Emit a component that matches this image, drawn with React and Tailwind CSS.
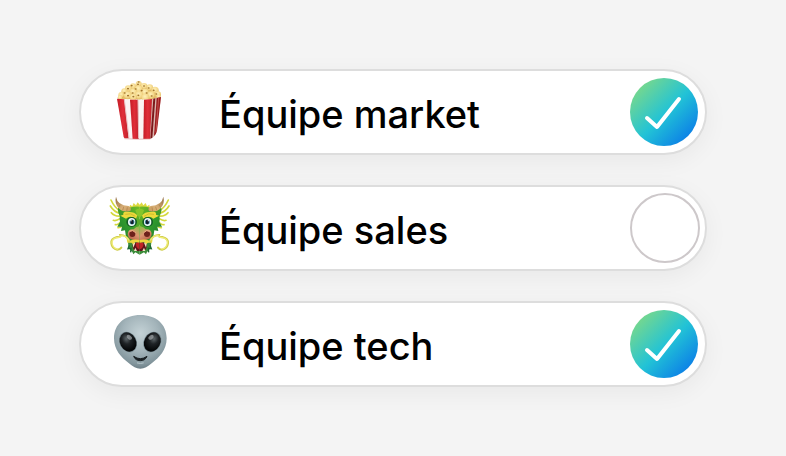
import React from "react";

const kernels = [
  [206, 72, 9], [189, 79, 9], [222, 79, 10], [175, 86, 10], [239, 83, 10], [206, 88, 12],
  [163, 94, 9], [255, 91, 11], [190, 97, 12], [225, 98, 12], [154, 105, 9], [264, 103, 9],
  [173, 106, 12], [207, 106, 13], [243, 106, 12], [150, 113, 7], [190, 112, 11], [226, 113, 12], [266, 111, 7],
];

const crumbs = [
  [206, 66], [204, 73], [185, 77], [222, 78], [174, 86], [197, 87], [236, 84], [251, 91], [215, 92],
  [164, 99], [188, 99], [230, 99], [259, 102], [174, 107], [205, 106], [245, 108], [190, 110],
];

function Popcorn() {
  return (
    <svg viewBox="117 60 192 192" className="size-16 shrink-0" aria-hidden="true">
      <defs>
        <linearGradient id="popcornRed" x1="0" x2="1" y1="0" y2="0">
          <stop offset="0" stopColor="#c41c26" />
          <stop offset="0.5" stopColor="#e02d38" />
          <stop offset="1" stopColor="#c2222c" />
        </linearGradient>
        <radialGradient id="popcornKernel" cx="0.45" cy="0.35" r="0.65">
          <stop offset="0" stopColor="#fff1b8" />
          <stop offset="0.65" stopColor="#f3d687" />
          <stop offset="1" stopColor="#dbb25a" />
        </radialGradient>
      </defs>
      <path d="M150 118 Q152 98 176 90 Q206 72 236 88 Q260 94 267 116 Z" fill="#e6c06a" />
      {kernels.map(([x, y, r]) => (
        <circle key={`${x}-${y}`} cx={x} cy={y} r={r} fill="url(#popcornKernel)" />
      ))}
      {crumbs.map(([x, y]) => (
        <ellipse key={`${x}-${y}`} cx={x} cy={y} rx="3.2" ry="2.4" fill="#a3752d" />
      ))}
      <path d="M141 116 Q190 121 243 118 L240 237 H168 Q162 237 161 231 Z" fill="#fbf3f3" />
      <path d="M243 118 L273 111 L259 217 Q256 231 240 237 Z" fill="#d9b5ad" />
      <path d="M141 116 L163 118 L176 235 H167 Q162 235 161 231 Z" fill="url(#popcornRed)" />
      <path d="M180 119 H204 L206 237 H188 Z" fill="url(#popcornRed)" />
      <path d="M222 119 L246 117 L240 237 H220 Z" fill="url(#popcornRed)" />
      <path d="M250 116 L256 115 L247 233 L241 236 Z" fill="#7c1719" />
      <path d="M260 114 L273 111 L261 212 Q258 224 252 228 Z" fill="#9c1c20" />
      <path d="M266 114 L258 217" stroke="#d66b62" strokeWidth="2" fill="none" />
      <path d="M163 119 L177 233 M204 120 L206 234" stroke="#e9c3c4" strokeWidth="3" fill="none" />
      <path d="M163 236 Q200 239 241 237" stroke="#d6a09f" strokeWidth="2" fill="none" />
    </svg>
  );
}

// One half of the face, drawn twice and mirrored
function DragonHalf() {
  return (
    <g>
      {/* Side frills */}
      <path
        d="M152 94 Q134 84 123 60 M150 100 Q132 96 121 78 M152 108 Q134 110 124 98 M150 116 Q138 124 130 121 M152 126 Q144 136 136 134 M156 138 Q150 144 144 143"
        fill="none"
        stroke="#d3d83c"
        strokeWidth="5"
        strokeLinecap="round"
      />
      {/* Head */}
      <path
        d="M209 80 Q178 78 158 94 Q146 104 150 126 L142 140 L156 140 L153 153 L165 151 L168 170 L180 190 L209 196 Z"
        fill="url(#dragonGreen)"
      />
      <path d="M144 84 Q158 84 166 98 L151 110 Q142 98 144 84 Z" fill="#3f9a2a" />
      {/* Horn */}
      <path d="M138 50 Q142 76 176 78 Q186 84 181 93 Q160 98 148 87 Q132 71 138 50 Z" fill="url(#dragonHorn)" />
      <path d="M150 74 L146 83 M161 80 L158 91 M172 82 L170 94" stroke="#a97b45" strokeWidth="2" />
      {/* Brow */}
      <path d="M160 104 Q158 92 174 96 Q192 94 202 106 L198 116 Q180 104 168 116 L151 107 Z" fill="#ecd93a" />
      <path d="M166 103 Q182 97 196 109" stroke="#bfae28" strokeWidth="2" fill="none" />
      {/* Eye */}
      <ellipse cx="185" cy="126" rx="16" ry="15" fill="#135d24" />
      <ellipse cx="185" cy="126" rx="11" ry="12" fill="#f6fbfb" />
      <circle cx="186" cy="126" r="7.5" fill="#4b9bbb" />
      <ellipse cx="186" cy="126" rx="5" ry="7" fill="#101e2a" />
      <circle cx="183" cy="122" r="2" fill="#ffffff" />
      {/* Jaw */}
      <path d="M174 186 Q174 207 187 216 L190 223 L196 217 L209 224 L209 184 Z" fill="#3b8c39" />
      <path d="M178 196 L174 206 L183 205 L182 217" stroke="#1c6630" strokeWidth="4" fill="none" />
      <path d="M188 190 Q186 208 196 213 L209 213 L209 186 Z" fill="#5e1519" />
      <path d="M198 188 Q196 204 209 208 V186 Z" fill="#c02427" />
      <path d="M187 186 L190 203 L196 188 Z M192 213 L196 203 L201 213 Z" fill="#f3e6c8" />
      {/* Snout */}
      <path d="M209 138 Q196 140 191 148 Q174 146 173 162 Q174 178 191 180 L209 182 Z" fill="url(#dragonSnout)" />
      <ellipse cx="187" cy="162" rx="9" ry="9" fill="#6d211b" />
      <path d="M179 154 Q188 148 197 158" stroke="#f4ae87" strokeWidth="3" fill="none" />
      <path d="M209 180 Q192 176 178 183 L170 177 L172 188 L184 188 L190 192 L196 186 L209 188 Z" fill="#ecd83e" />
      {/* Whisker */}
      <path
        d="M178 183 Q169 165 151 165 Q154 172 141 171 Q122 176 124 190 Q126 206 142 209 Q150 209 154 203"
        fill="none"
        stroke="#cfcd4b"
        strokeWidth="6"
        strokeLinecap="round"
      />
      <path
        d="M176 180 Q168 166 154 167 Q150 174 140 173 Q124 178 126 190 Q129 204 142 207"
        fill="none"
        stroke="#f0ed78"
        strokeWidth="4"
        strokeLinecap="round"
      />
    </g>
  );
}

function Dragon() {
  return (
    <svg viewBox="117 48 192 192" className="size-16 shrink-0" aria-hidden="true">
      <defs>
        <linearGradient id="dragonGreen" x1="1" x2="0" y1="0" y2="1">
          <stop offset="0" stopColor="#74bb24" />
          <stop offset="0.5" stopColor="#309a2c" />
          <stop offset="1" stopColor="#1d7430" />
        </linearGradient>
        <linearGradient id="dragonHorn" x1="0" x2="1" y1="0" y2="1">
          <stop offset="0" stopColor="#8d6a40" />
          <stop offset="0.6" stopColor="#d9b078" />
          <stop offset="1" stopColor="#c79a5c" />
        </linearGradient>
        <linearGradient id="dragonSnout" x1="0.8" x2="0.3" y1="0" y2="1">
          <stop offset="0" stopColor="#8fbd49" />
          <stop offset="0.5" stopColor="#dc9671" />
          <stop offset="1" stopColor="#b65c45" />
        </linearGradient>
      </defs>
      <path
        d="M178 86 L180 74 L187 79 L191 69 L198 76 L203 67 L209 74 L215 67 L220 76 L227 69 L231 79 L238 74 L240 86 Z"
        fill="#dcd93f"
      />
      <DragonHalf />
      <g transform="translate(418 0) scale(-1 1)">
        <DragonHalf />
      </g>
      <path d="M196 90 Q209 82 222 90 L216 107 L209 112 L202 107 Z" fill="#86c52b" />
      <path d="M203 116 Q209 120 215 116 L214 134 H204 Z" fill="#56a72d" />
    </svg>
  );
}

function Alien() {
  return (
    <svg viewBox="117 48 192 192" className="size-16 shrink-0" aria-hidden="true">
      <defs>
        <radialGradient id="alienSkin" cx="0.5" cy="0.34" r="0.68">
          <stop offset="0" stopColor="#c4d2d6" />
          <stop offset="0.5" stopColor="#a3b4ba" />
          <stop offset="0.85" stopColor="#82959c" />
          <stop offset="1" stopColor="#687a82" />
        </radialGradient>
        <radialGradient id="alienEye" cx="0.5" cy="0.32" r="0.6">
          <stop offset="0" stopColor="#5d6568" />
          <stop offset="0.45" stopColor="#1f2326" />
          <stop offset="1" stopColor="#050708" />
        </radialGradient>
      </defs>
      <path
        d="M211 57 C258 57 290 84 290 127 C290 162 268 185 246 201 C232 212 224 218 211 218 C198 218 190 212 176 201 C154 185 132 162 132 127 C132 84 164 57 211 57 Z"
        fill="url(#alienSkin)"
      />
      <g transform="rotate(-28 174 138)">
        <ellipse cx="174" cy="138" rx="26" ry="32" fill="#76888f" />
        <ellipse cx="174" cy="138" rx="24" ry="30" fill="url(#alienEye)" />
      </g>
      <g transform="rotate(28 247 138)">
        <ellipse cx="247" cy="138" rx="26" ry="32" fill="#76888f" />
        <ellipse cx="247" cy="138" rx="24" ry="30" fill="url(#alienEye)" />
      </g>
      <ellipse cx="178" cy="124" rx="9" ry="6" fill="#b7bdbf" opacity="0.6" transform="rotate(35 178 124)" />
      <ellipse cx="243" cy="124" rx="9" ry="6" fill="#b7bdbf" opacity="0.6" transform="rotate(-35 243 124)" />
      <path d="M191 181 Q211 195 231 181 Q226 194 211 194 Q196 194 191 181 Z" fill="#1a2023" stroke="#1a2023" strokeWidth="3" strokeLinejoin="round" />
      <path d="M202 201 Q211 204 220 201" stroke="#b7c6cb" strokeWidth="3" fill="none" strokeLinecap="round" />
    </svg>
  );
}

const initialTeams = [
  { id: "market", name: "Équipe market", Icon: Popcorn, selected: true },
  { id: "sales", name: "Équipe sales", Icon: Dragon, selected: false },
  { id: "tech", name: "Équipe tech", Icon: Alien, selected: true },
];

function TeamRow({ team, onToggle }) {
  const { id, name, Icon, selected } = team;

  return (
    <li>
      <label
        htmlFor={id}
        className="flex items-center rounded-full border-2 border-[#dddddd] bg-white py-1.5 pl-7 pr-[5px] shadow-[0_6px_24px_rgba(0,0,0,0.05)] cursor-pointer"
      >
        <Icon />
        <span className="ml-[46px] flex-1 pt-1 text-[38px] leading-12 font-medium text-black">{name}</span>
        <span className="relative flex size-[70px] shrink-0 items-center">
          <input
            id={id}
            type="checkbox"
            checked={selected}
            onChange={() => onToggle(id)}
            className="size-[70px] cursor-pointer appearance-none rounded-full border-2 border-[#cdc8ca] bg-white checked:size-[68px] checked:border-0 checked:bg-[linear-gradient(135deg,#78d88c_12%,#22c3d6_52%,#0a7be8_90%)]"
          />
          {selected && (
            <svg viewBox="0 0 68 68" className="pointer-events-none absolute left-0 size-[68px]" aria-hidden="true">
              <path
                d="M17 40 L27 49 L49 21"
                fill="none"
                stroke="#ffffff"
                strokeWidth="4"
                strokeLinecap="round"
                strokeLinejoin="round"
              />
            </svg>
          )}
        </span>
      </label>
    </li>
  );
}

export default function App() {
  const [teams, setTeams] = React.useState(initialTeams);

  const handleToggle = (id) => {
    setTeams(teams.map((team) => (team.id === id ? { ...team, selected: !team.selected } : team)));
  };

  return (
    <main className="flex min-h-screen items-center bg-[#f4f4f4] px-[79px] font-['Inter',sans-serif]">
      <ul className="flex w-full flex-col gap-[30px]">
        {teams.map((team) => (
          <TeamRow key={team.id} team={team} onToggle={handleToggle} />
        ))}
      </ul>
    </main>
  );
}
